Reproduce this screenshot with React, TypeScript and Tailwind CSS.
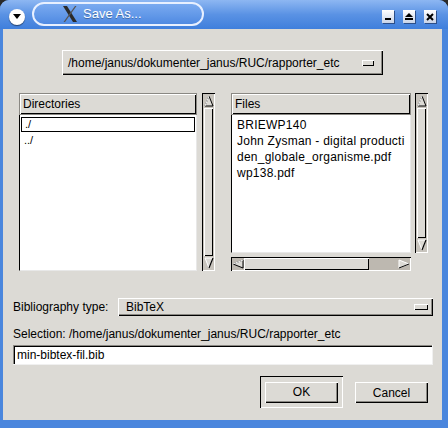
import React from 'react';

const font = { fontFamily: '"Liberation Sans", Arial, sans-serif' };

function UpArrow() {
    return (
        <svg width="10" height="12" viewBox="0 0 10 12" className="block">
            <polygon points="5,1 9,11 1,11" fill="#dcdad5" stroke="#000" strokeWidth="1" />
            <line x1="1" y1="11" x2="5" y2="1" stroke="#fff" strokeWidth="1" />
        </svg>
    );
}

function DownArrow() {
    return (
        <svg width="10" height="12" viewBox="0 0 10 12" className="block">
            <polygon points="1,1 9,1 5,11" fill="#dcdad5" stroke="#fff" strokeWidth="1" />
            <line x1="9" y1="1" x2="5" y2="11" stroke="#000" strokeWidth="1.2" />
        </svg>
    );
}

function VScroll({ h }: { h: string }) {
    return (
        <div className={`${h} w-[13px] bg-[#c8c4bd] shadow-[inset_1px_1px_0_#000,inset_-1px_-1px_0_#fff] p-[1px] flex flex-col`}>
            <div className="flex justify-center pt-[1px]"><UpArrow /></div>
            <div className="flex-1 mx-[1px] my-[1px] bg-[#dcdad5] shadow-[inset_1px_1px_0_#fff,inset_-1px_-1px_0_#000]" />
            <div className="flex justify-center pb-[1px]"><DownArrow /></div>
        </div>
    );
}

function ListHeader({ label }: { label: string }) {
    return (
        <div className="h-[22px] bg-[#dcdad5] border border-[#8a8883] shadow-[inset_1px_1px_0_#fff,inset_-1px_-1px_0_#000] flex items-center pl-[3px] text-[12px] text-black">
            {label}
        </div>
    );
}

export default function App() {
    return (
        <div className="w-[448px] h-[428px] bg-[#2a2a2a] overflow-hidden" style={font}>
            <div className="w-[448px] h-[428px] rounded-t-[9px] overflow-hidden bg-[#4a86dd] flex flex-col">
                {/* title bar */}
                <div className="h-[29px] flex items-center relative bg-gradient-to-b from-[#8db7f2] via-[#5a92e4] to-[#3f7fdc]">
                    <div className="absolute left-[9px] top-[9px] w-[16px] h-[16px] rounded-full bg-white shadow-[0_1px_1px_rgba(0,0,0,0.5)] flex items-center justify-center">
                        <svg width="8" height="6" viewBox="0 0 8 6"><polygon points="0,0 8,0 4,5" fill="#000" /></svg>
                    </div>
                    <div className="absolute left-[32px] top-[2px] w-[172px] h-[24px] rounded-full border-2 border-[#e8f0ff] bg-gradient-to-b from-[#7aaaf0] to-[#4f8ae2] flex items-center">
                        <svg width="16" height="18" viewBox="0 0 16 18" className="ml-[28px]">
                            <polygon points="1,1 5,1 15,17 11,17" fill="#2b2b2b" />
                            <polygon points="13,1 14.5,1 3,17 1.5,17" fill="#555" />
                        </svg>
                        <span className="ml-[5px] text-[13px] text-white [text-shadow:0_1px_0_rgba(0,0,0,0.3)]">Save As...</span>
                    </div>
                    <div className="absolute left-[382px] top-[10px] flex gap-[9px]">
                        <div className="w-[12px] h-[13px] bg-gradient-to-b from-white to-[#c9d4e8] shadow-[1px_1px_0_#2c4f8a] flex items-end justify-center pb-[3px]">
                            <div className="w-[6px] h-[2px] bg-black" />
                        </div>
                        <div className="w-[12px] h-[13px] bg-gradient-to-b from-white to-[#c9d4e8] shadow-[1px_1px_0_#2c4f8a] flex flex-col items-center justify-center gap-[1px]">
                            <svg width="8" height="4" viewBox="0 0 8 4"><polygon points="4,0 8,4 0,4" fill="#000" /></svg>
                            <div className="w-[8px] h-[2px] bg-black" />
                        </div>
                        <div className="w-[12px] h-[13px] bg-gradient-to-b from-white to-[#c9d4e8] shadow-[1px_1px_0_#2c4f8a] flex items-center justify-center">
                            <svg width="8" height="8" viewBox="0 0 8 8"><path d="M1 1 L7 7 M7 1 L1 7" stroke="#000" strokeWidth="2" /></svg>
                        </div>
                    </div>
                </div>

                {/* body */}
                <div className="flex-1 ml-[3px] mr-[6px] mb-[8px] bg-[#dcdad5] flex flex-col text-[12px] text-black">
                    <div className="mt-[21px] flex justify-center">
                        <div className="w-[321px] h-[25px] bg-[#dcdad5] shadow-[inset_1px_1px_0_#fff,inset_-1px_-1px_0_#000,inset_-2px_-2px_0_#8a8883] flex items-center pl-[6px] pr-[9px]">
                            <span className="flex-1">/home/janus/dokumenter_janus/RUC/rapporter_etc</span>
                            <div className="w-[12px] h-[6px] bg-[#dcdad5] shadow-[inset_1px_1px_0_#fff,inset_-1px_-1px_0_#000]" />
                        </div>
                    </div>

                    <div className="mt-[18px] ml-[16px] flex">
                        <div className="w-[178px] h-[178px] flex flex-col">
                            <ListHeader label="Directories" />
                            <div className="flex-1 bg-white border-l border-t-0 border-l-black border-r border-r-[#e8e8e8] border-b border-b-[#e8e8e8]">
                                <div className="mt-[2px] mx-[1px] h-[15px] border border-black flex items-center pl-[3px] text-[11px]">./</div>
                                <div className="h-[16px] flex items-center pl-[4px] text-[11px]">../</div>
                            </div>
                        </div>
                        <div className="ml-[5px]"><VScroll h="h-[178px]" /></div>

                        <div className="ml-[16px] flex flex-col">
                            <div className="w-[180px] h-[160px] flex flex-col">
                                <ListHeader label="Files" />
                                <div className="flex-1 bg-white border-l border-l-black border-r border-r-[#e8e8e8] border-b border-b-[#e8e8e8] pt-[2px] pl-[5px] tracking-[0.25px] overflow-hidden whitespace-nowrap">
                                    <div className="h-[16px] leading-[16px]">BRIEWP140</div>
                                    <div className="h-[16px] leading-[16px]">John Zysman - digital producti</div>
                                    <div className="h-[16px] leading-[16px]">den_globale_organisme.pdf</div>
                                    <div className="h-[16px] leading-[16px]">wp138.pdf</div>
                                </div>
                            </div>
                            <div className="mt-[4px] w-[180px] h-[14px] bg-[#bdb8b0] shadow-[inset_1px_1px_0_#000,inset_-1px_-1px_0_#fff] flex items-center p-[1px]">
                                <svg width="12" height="10" viewBox="0 0 12 10" className="block">
                                    <polygon points="1,5 11,1 11,9" fill="#dcdad5" stroke="#000" strokeWidth="1" />
                                    <line x1="1" y1="5" x2="11" y2="1" stroke="#fff" />
                                </svg>
                                <div className="w-[125px] h-[12px] bg-[#dcdad5] shadow-[inset_1px_1px_0_#fff,inset_-1px_-1px_0_#000]" />
                                <div className="flex-1" />
                                <svg width="12" height="10" viewBox="0 0 12 10" className="block">
                                    <polygon points="1,1 11,5 1,9" fill="#dcdad5" stroke="#fff" strokeWidth="1" />
                                    <line x1="11" y1="5" x2="1" y2="9" stroke="#000" />
                                </svg>
                            </div>
                        </div>
                        <div className="ml-[4px]"><VScroll h="h-[160px]" /></div>
                    </div>

                    <div className="mt-[27px] ml-[10px] mr-[9px] flex items-center h-[18px]">
                        <span className="w-[105px]">Bibliography type:</span>
                        <div className="flex-1 h-[18px] shadow-[inset_1px_1px_0_#fff,inset_-1px_-1px_0_#000,inset_-2px_-2px_0_#8a8883] flex items-center pl-[8px] pr-[5px]">
                            <span className="flex-1">BibTeX</span>
                            <div className="w-[14px] h-[6px] shadow-[inset_1px_1px_0_#fff,inset_-1px_-1px_0_#000]" />
                        </div>
                    </div>

                    <div className="mt-[10px] ml-[10px] h-[16px] leading-[16px]">Selection: /home/janus/dokumenter_janus/RUC/rapporter_etc</div>

                    <div className="mt-[3px] ml-[10px] mr-[9px] h-[20px] bg-white shadow-[inset_1px_1px_0_#8a8883,inset_2px_2px_0_#000] border-r border-b border-[#f0f0f0] flex items-center pl-[4px]">
                        min-bibtex-fil.bib
                    </div>

                    <div className="mt-[11px] flex items-start">
                        <div className="ml-[257px] w-[83px] h-[32px] shadow-[inset_1px_1px_0_#000,inset_-1px_-1px_0_#fff] flex items-center justify-center">
                            <div className="w-[73px] h-[21px] shadow-[inset_1px_1px_0_#fff,inset_-1px_-1px_0_#000,inset_-2px_-2px_0_#8a8883] flex items-center justify-center">OK</div>
                        </div>
                        <div className="ml-[12px] mt-[6px] w-[73px] h-[21px] shadow-[inset_1px_1px_0_#fff,inset_-1px_-1px_0_#000,inset_-2px_-2px_0_#8a8883] flex items-center justify-center">Cancel</div>
                    </div>
                </div>
            </div>
        </div>
    );
}
